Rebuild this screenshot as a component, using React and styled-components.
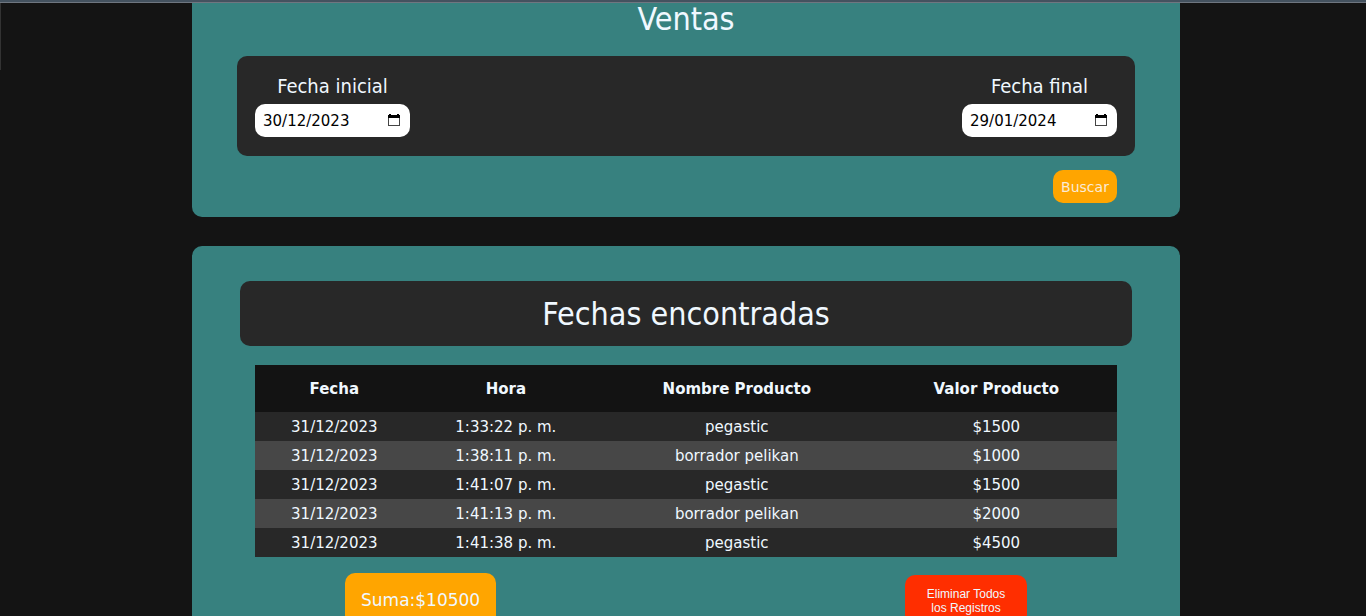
import React, { useState } from "react";
import styled, { createGlobalStyle } from "styled-components";

const GlobalStyle = createGlobalStyle`
  * { box-sizing: border-box; }
  html { scrollbar-width: none; }
  body {
    margin: 0;
    background: #141414;
    color: aliceblue;
    font-family: Verdana, "DejaVu Sans", sans-serif;
    font-size: 15px;
  }
`;

const Header = styled.header`
  height: 3px;
  background: #44525f;
  border-bottom: 1px solid #6f7680;
`;

const Body = styled.div`
  display: flex;
  align-items: flex-start;
`;

const SideEdge = styled.aside`
  width: 1px;
  height: 67px;
  background: #333333;
`;

const Main = styled.main`
  flex: 1;
  display: flex;
  flex-direction: column;
  align-items: center;
  gap: 29px;
  padding: 0 0 32px 5px;
`;

const Panel = styled.section`
  width: 988px;
  max-width: 100%;
  padding: ${(p) => (p.$top ? "0 45px 14px" : "35px 48px 32px")};
  border-radius: ${(p) => (p.$top ? "0 0 10px 10px" : "10px")};
  background: #37817f;
`;

const Title = styled.h1`
  margin: 0;
  padding-bottom: 20px;
  font-family: "DejaVu Sans Condensed", "DejaVu Sans", sans-serif;
  font-size: 32px;
  font-weight: 400;
  line-height: 33px;
  text-align: center;
`;

const Filters = styled.div`
  display: flex;
  justify-content: space-between;
  padding: 18px 18px 19px;
  border-radius: 10px;
  background: #282828;
`;

const Field = styled.div`
  display: flex;
  flex-direction: column;
  align-items: center;
  gap: 6px;
`;

const FieldLabel = styled.label`
  font-family: "DejaVu Sans Condensed", "DejaVu Sans", sans-serif;
  font-size: 20px;
  line-height: 24px;
`;

const DateBox = styled.div`
  display: flex;
  align-items: center;
  justify-content: space-between;
  width: 155px;
  height: 33px;
  padding: 0 8px;
  border-radius: 10px;
  background: #ffffff;
`;

const DateInput = styled.input`
  width: 104px;
  padding: 0;
  border: 0;
  outline: 0;
  background: transparent;
  color: #000000;
  font: inherit;
`;

const PickerButton = styled.button`
  display: flex;
  padding: 0;
  border: 0;
  background: transparent;
  color: #000000;
  cursor: pointer;
`;

const Actions = styled.div`
  display: flex;
  justify-content: flex-end;
  padding: 14px 18px 0;
`;

const SearchButton = styled.button`
  height: 33px;
  width: 64px;
  padding: 0;
  border: 0;
  border-radius: 10px;
  background: #ffa500;
  color: antiquewhite;
  font: inherit;
  font-size: 14px;
  cursor: pointer;
`;

const Banner = styled.h2`
  margin: 0 0 19px;
  padding: 14px 0 12px;
  border-radius: 10px;
  background: #282828;
  font-family: "DejaVu Sans Condensed", "DejaVu Sans", sans-serif;
  font-size: 32px;
  font-weight: 400;
  line-height: 39px;
  text-align: center;
`;

const Results = styled.div`
  padding: 0 15px;
`;

const Table = styled.table`
  width: 100%;
  table-layout: fixed;
  border-collapse: collapse;
  text-align: center;
`;

const HeadCell = styled.th`
  width: ${(p) => p.$width};
  height: 47px;
  padding: 0;
  background: #131313;
`;

const Row = styled.tr`
  background: #282828;
  &:nth-child(even) { background: #474747; }
`;

const Cell = styled.td`
  height: 29px;
  padding: 0;
`;

const Footer = styled.div`
  display: flex;
  justify-content: space-between;
  align-items: center;
  padding: 16px 90px 0;
`;

const Total = styled.output`
  padding: 16px;
  border-radius: 10px;
  background: #ffa500;
  font-size: 17px;
  line-height: 22px;
`;

const DeleteButton = styled.button`
  width: 122px;
  height: 50px;
  padding: 2px 16px 0;
  border: 0;
  border-radius: 10px;
  background: #ff2e00;
  color: aliceblue;
  font-family: "Liberation Sans", Arial, sans-serif;
  font-size: 12px;
  line-height: 14px;
  cursor: pointer;
`;

const columns = [
  ["Fecha", "18.4%"],
  ["Hora", "21.4%"],
  ["Nombre Producto", "32.2%"],
  ["Valor Producto", "28%"],
];

const sales = [
  ["31/12/2023", "1:33:22 p. m.", "pegastic", 1500],
  ["31/12/2023", "1:38:11 p. m.", "borrador pelikan", 1000],
  ["31/12/2023", "1:41:07 p. m.", "pegastic", 1500],
  ["31/12/2023", "1:41:13 p. m.", "borrador pelikan", 2000],
  ["31/12/2023", "1:41:38 p. m.", "pegastic", 4500],
];

const total = sales.reduce((sum, sale) => sum + sale[3], 0);

function CalendarIcon() {
  return (
    <svg width="16" height="16" viewBox="0 0 16 16" aria-hidden="true">
      <path fill="#444444" fillRule="evenodd" d="M2 2h12v11H2zM3 5v7h10V5z" />
      <path fill="currentColor" d="M2 2h1V1h2v1h6V1h2v1h1v3H2z" />
    </svg>
  );
}

function DateField({ id, label, initial }) {
  const [value, setValue] = useState(initial);
  return (
    <Field>
      <FieldLabel htmlFor={id}>{label}</FieldLabel>
      <DateBox>
        <DateInput id={id} type="text" value={value} onChange={(e) => setValue(e.target.value)} />
        <PickerButton type="button" aria-label={`Elegir ${label}`}>
          <CalendarIcon />
        </PickerButton>
      </DateBox>
    </Field>
  );
}

export default function App() {
  return (
    <>
      <GlobalStyle />
      <Header />
      <Body>
        <SideEdge />
        <Main>
          <Panel $top>
            <Title>Ventas</Title>
            <Filters>
              <DateField id="inicio" label="Fecha inicial" initial="30/12/2023" />
              <DateField id="fin" label="Fecha final" initial="29/01/2024" />
            </Filters>
            <Actions>
              <SearchButton type="button">Buscar</SearchButton>
            </Actions>
          </Panel>
          <Panel>
            <Banner>Fechas encontradas</Banner>
            <Results>
              <Table>
                <thead>
                  <tr>
                    {columns.map(([name, width]) => (
                      <HeadCell key={name} $width={width} scope="col">{name}</HeadCell>
                    ))}
                  </tr>
                </thead>
                <tbody>
                  {sales.map(([date, time, product, price]) => (
                    <Row key={time}>
                      <Cell>{date}</Cell>
                      <Cell>{time}</Cell>
                      <Cell>{product}</Cell>
                      <Cell>{`$${price}`}</Cell>
                    </Row>
                  ))}
                </tbody>
              </Table>
              <Footer>
                <Total>{`Suma:$${total}`}</Total>
                <DeleteButton type="button">Eliminar Todos los Registros</DeleteButton>
              </Footer>
            </Results>
          </Panel>
        </Main>
      </Body>
    </>
  );
}
